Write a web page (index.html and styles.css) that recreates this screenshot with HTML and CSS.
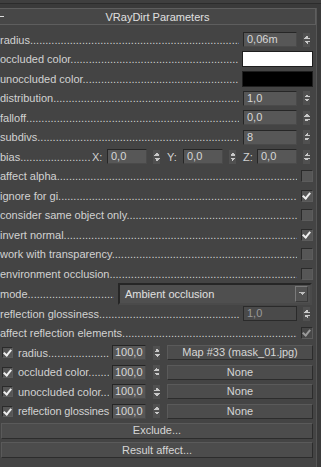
FILE: index.html
```html
<!DOCTYPE html>
<html>
<head>
  <link rel="stylesheet" href="styles.css">
</head>
<body>
  <div class="top"></div>
  <div class="panel">
    <!-- Rollout header -->
    <div class="head">
      <span class="minus"></span>
      <span class="title">VRayDirt Parameters</span>
      <span></span>
    </div>

    <div class="rows">
      <div class="row">
        <span class="lbl">radius</span>
        <div class="spin"><span class="field">0,06m</span><span class="arrows"></span></div>
      </div>
      <div class="row">
        <span class="lbl">occluded color</span>
        <span class="swatch white"></span>
      </div>
      <div class="row">
        <span class="lbl">unoccluded color</span>
        <span class="swatch black"></span>
      </div>
      <div class="row">
        <span class="lbl">distribution</span>
        <div class="spin"><span class="field">1,0</span><span class="arrows"></span></div>
      </div>
      <div class="row">
        <span class="lbl">falloff</span>
        <div class="spin"><span class="field">0,0</span><span class="arrows"></span></div>
      </div>
      <div class="row">
        <span class="lbl">subdivs</span>
        <div class="spin"><span class="field">8</span><span class="arrows"></span></div>
      </div>
      <div class="row bias">
        <span class="lbl">bias</span>
        <span class="axis first">X:</span>
        <div class="spin small"><span class="field">0,0</span><span class="arrows"></span></div>
        <span class="axis">Y:</span>
        <div class="spin small"><span class="field">0,0</span><span class="arrows"></span></div>
        <span class="axis z">Z:</span>
        <div class="spin small"><span class="field">0,0</span><span class="arrows"></span></div>
      </div>
      <div class="row">
        <span class="lbl">affect alpha</span>
        <span class="check"></span>
      </div>
      <div class="row">
        <span class="lbl">ignore for gi</span>
        <span class="check on"></span>
      </div>
      <div class="row">
        <span class="lbl">consider same object only</span>
        <span class="check"></span>
      </div>
      <div class="row">
        <span class="lbl">invert normal</span>
        <span class="check on"></span>
      </div>
      <div class="row">
        <span class="lbl">work with transparency</span>
        <span class="check"></span>
      </div>
      <div class="row">
        <span class="lbl">environment occlusion</span>
        <span class="check"></span>
      </div>
      <div class="row mode">
        <span class="lbl">mode</span>
        <div class="dropdown">
          <span>Ambient occlusion</span>
          <span class="drop-btn"></span>
        </div>
      </div>
      <div class="row">
        <span class="lbl">reflection glossiness</span>
        <div class="spin disabled"><span class="field">1,0</span><span class="arrows"></span></div>
      </div>
      <div class="row">
        <span class="lbl">affect reflection elements</span>
        <span class="check on disabled"></span>
      </div>

      <!-- Texture maps -->
      <div class="row map">
        <span class="check on"></span>
        <span class="lbl">radius</span>
        <div class="spin pct"><span class="field">100,0</span><span class="arrows"></span></div>
        <button class="btn">Map #33 (mask_01.jpg)</button>
      </div>
      <div class="row map">
        <span class="check on"></span>
        <span class="lbl">occluded color</span>
        <div class="spin pct"><span class="field">100,0</span><span class="arrows"></span></div>
        <button class="btn">None</button>
      </div>
      <div class="row map">
        <span class="check on"></span>
        <span class="lbl">unoccluded color</span>
        <div class="spin pct"><span class="field">100,0</span><span class="arrows"></span></div>
        <button class="btn">None</button>
      </div>
      <div class="row map">
        <span class="check on"></span>
        <span class="lbl nodots">reflection glossines</span>
        <div class="spin pct"><span class="field">100,0</span><span class="arrows"></span></div>
        <button class="btn">None</button>
      </div>

      <div class="row wide">
        <button class="btn">Exclude...</button>
      </div>
      <div class="row wide">
        <button class="btn">Result affect...</button>
      </div>
    </div>
  </div>
</body>
</html>
```

FILE: styles.css
```css
body {
  margin: 0;
  width: 321px;
  height: 467px;
  overflow: hidden;
  background-color: #3a3a3a;
  font-family: "Liberation Sans", Arial, sans-serif;
  font-size: 11px;
  color: #d2d2d2;
}

.top {
  height: 3px;
  border-bottom: 1px solid #2c2c2c;
  background-color: #3f3f3f;
  margin-bottom: 4px;
}

.panel {
  width: 316px;
  height: 463px;
  border-right: 1px solid #565656;
  background-color: #444444;
}

.head {
  display: grid;
  grid-template-columns: 20px 1fr 20px;
  align-items: center;
  height: 15px;
  border: 1px solid #5e5e5e;
  border-left: none;
  background-color: #474747;
}

.minus {
  width: 4px;
  height: 1px;
  background-color: #dcdcdc;
}

.title {
  text-align: center;
  color: #e0e0e0;
}

.rows {
  width: 313px;
  padding-top: 5px;
}

.row {
  display: flex;
  align-items: center;
  height: 19.5px;
}

.row.mode {
  height: 20.5px;
}

.lbl {
  flex: 1;
  min-width: 0;
  overflow: hidden;
  white-space: nowrap;
  margin-right: 4px;
}

.lbl::after {
  content: "..............................................................................................................";
}

.lbl.nodots::after {
  content: "";
}

.row.bias .lbl {
  margin-right: 0;
}

.spin {
  display: flex;
  align-items: center;
  margin-right: 3px;
}

.field {
  box-sizing: border-box;
  width: 54px;
  height: 15px;
  line-height: 13px;
  padding-left: 3px;
  border: 1px solid #262626;
  border-right-color: #4a4a4a;
  border-bottom-color: #4a4a4a;
  background-color: #575757;
  color: #d8d8d8;
  white-space: nowrap;
  overflow: hidden;
}

.arrows {
  width: 7px;
  height: 14px;
  margin-left: 6px;
  background-color: #505050;
  background-image:
    linear-gradient(to bottom right, transparent 50%, #c8c8c8 50%),
    linear-gradient(to bottom left, transparent 50%, #c8c8c8 50%),
    linear-gradient(to top right, transparent 50%, #c8c8c8 50%),
    linear-gradient(to top left, transparent 50%, #c8c8c8 50%);
  background-size: 3px 3px;
  background-repeat: no-repeat;
  background-position: 0.5px 3px, 3.5px 3px, 0.5px 8px, 3.5px 8px;
}

.spin.small .field {
  width: 40px;
}

.spin.small {
  margin-right: 0;
}

.spin.small:last-child {
  margin-right: 3px;
}

.spin.disabled .field {
  background-color: #4a4a4a;
  color: #9a9a9a;
  border-color: #2a2a2a;
}

.axis {
  width: 17px;
  margin-left: 6px;
  padding-left: 1px;
  box-sizing: border-box;
}

.axis.first {
  margin-left: 0;
  padding-left: 2px;
}

.axis.z {
  width: 15px;
}

.swatch {
  box-sizing: border-box;
  width: 71px;
  height: 16px;
  border: 1px solid #1e1e1e;
}

.swatch.white {
  background-color: #ffffff;
}

.swatch.black {
  background-color: #000000;
}

.check {
  box-sizing: border-box;
  width: 12px;
  height: 12px;
  border: 1px solid #2a2a2a;
  border-right-color: #5c5c5c;
  border-bottom-color: #5c5c5c;
  background-color: #565656;
  position: relative;
}

.check.on::after {
  content: "";
  position: absolute;
  left: 2px;
  top: 0px;
  width: 3px;
  height: 6px;
  border: solid #eeeeee;
  border-width: 0 2px 2px 0;
  transform: rotate(40deg);
}

.check.disabled {
  background-color: #474747;
}

.check.disabled::after {
  border-color: #9a9a9a;
}

.dropdown {
  box-sizing: border-box;
  display: flex;
  align-items: center;
  justify-content: space-between;
  width: 194px;
  height: 22px;
  margin-right: 1px;
  padding-left: 5px;
  padding-right: 2px;
  border: 2px solid #262626;
  border-right-color: #4a4a4a;
  border-bottom-color: #4a4a4a;
  background-color: #4f4f4f;
  font-size: 11px;
  color: #e0e0e0;
}

.drop-btn {
  box-sizing: border-box;
  width: 13px;
  height: 16px;
  border: 1px solid #7a7a7a;
  border-right-color: #3a3a3a;
  border-bottom-color: #3a3a3a;
  background-color: #525252;
  background-image:
    linear-gradient(to top right, transparent 50%, #bdbdbd 50%),
    linear-gradient(to top left, transparent 50%, #bdbdbd 50%);
  background-size: 3px 3px;
  background-repeat: no-repeat;
  background-position: 2.5px 5px, 5.5px 5px;
}

.row.map .check {
  width: 11px;
  height: 11px;
  margin-left: 2px;
  margin-right: 5px;
}

.row.map .lbl {
  flex: none;
  width: 91px;
  margin-right: 3px;
}

.row.map .lbl.nodots {
  width: 93px;
  margin-right: 1px;
  letter-spacing: -0.12px;
}

.spin.pct {
  margin-right: 7px;
}

.spin.pct .field {
  width: 34px;
  padding-left: 2px;
}

.spin.pct .arrows {
  margin-left: 7px;
}

.btn {
  flex: 1;
  height: 15px;
  padding: 0;
  border: 1px solid #2c2c2c;
  border-top-color: #5a5a5a;
  border-left-color: #5a5a5a;
  background-color: #4c4c4c;
  font-family: "Liberation Sans", Arial, sans-serif;
  font-size: 11px;
  line-height: 13px;
  color: #d6d6d6;
  text-align: center;
}

.row.wide .btn {
  height: 16px;
  margin-left: 1px;
}
```
